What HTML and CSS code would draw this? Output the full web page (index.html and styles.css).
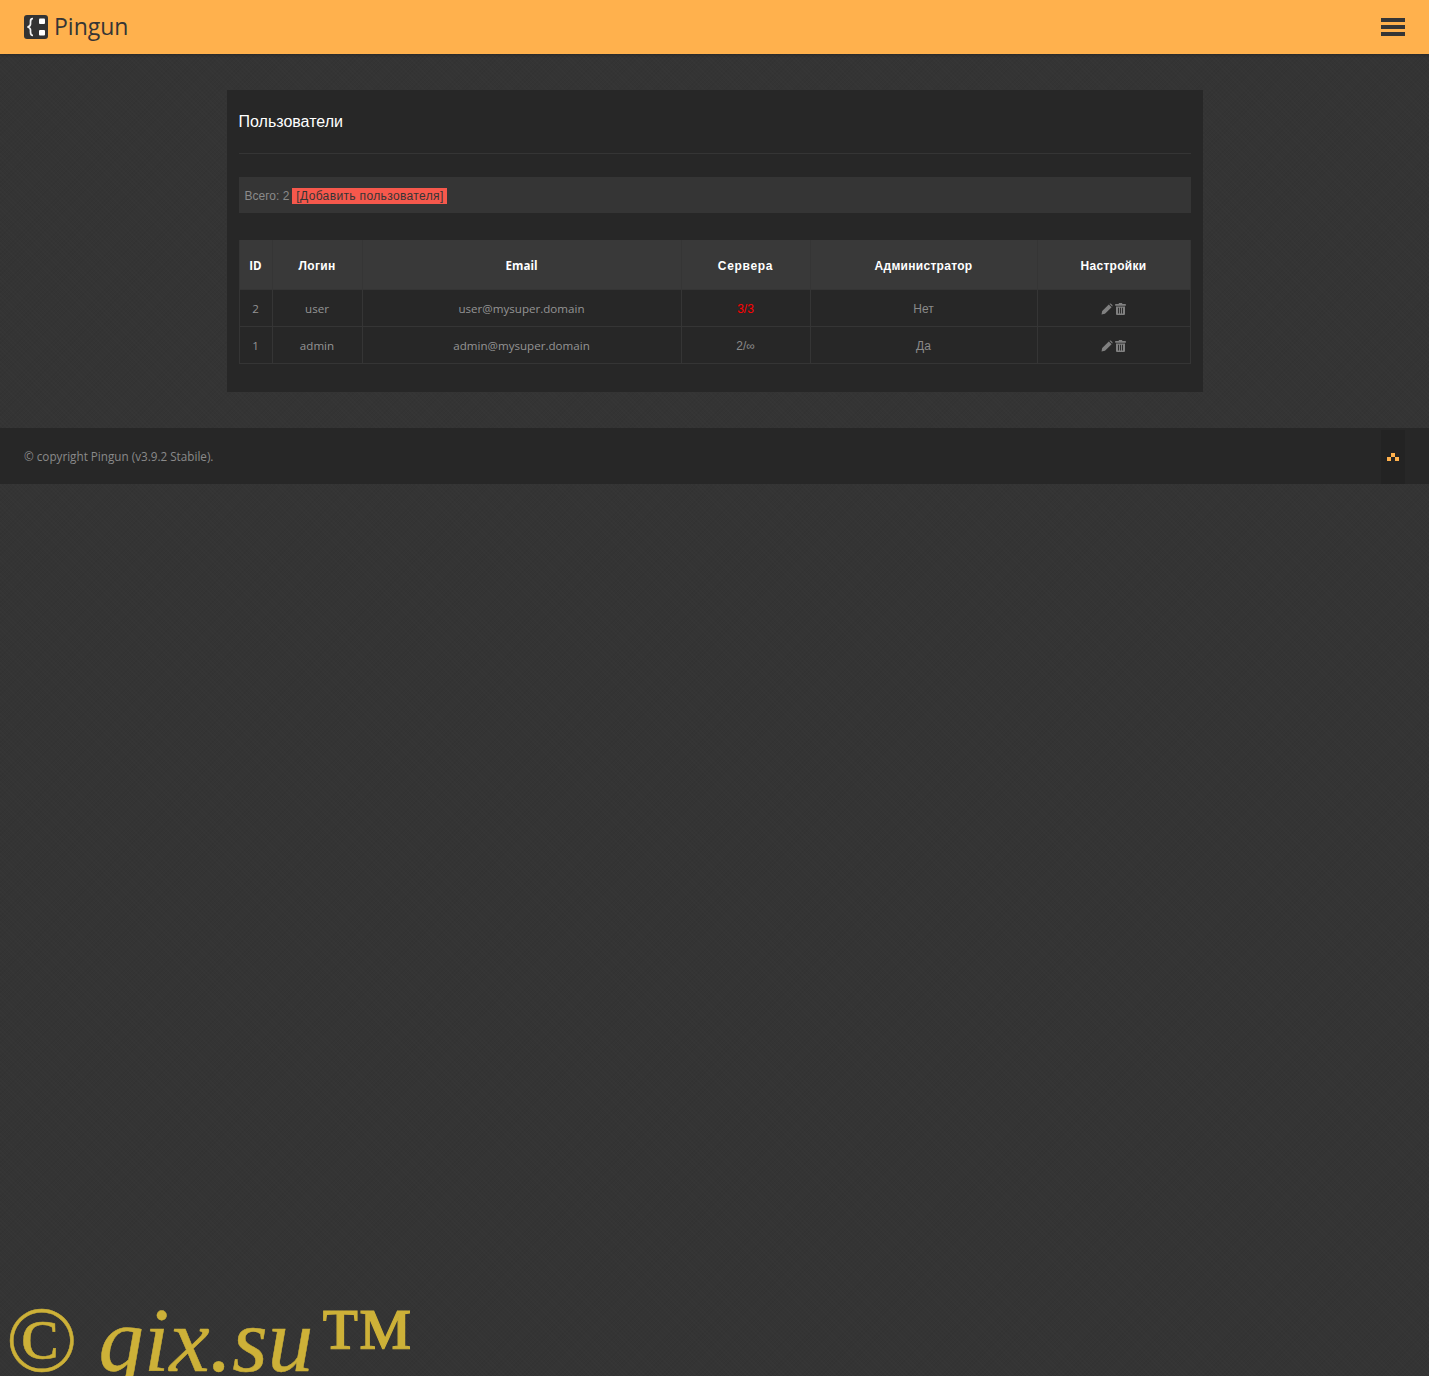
FILE: index.html
```html
<!DOCTYPE html>
<html lang="ru">
<head>
    <meta charset="UTF-8">
    <title>Pingun</title>
    <link rel="stylesheet" href="styles.css">
</head>
<body>

    <header class="topbar">
        <a class="brand" href="#">
            <svg class="brand-icon" width="24" height="24" viewBox="0 0 24 24">
                <rect width="24" height="24" rx="3" fill="#333"/>
                <path d="M9 3.5 C6.5 3.5 6.5 5 6.5 7 L6.5 9 C6.5 10.5 5.5 11.5 3.5 12 C5.5 12.5 6.5 13.5 6.5 15 L6.5 17 C6.5 19 6.5 20.5 9 20.5" fill="none" stroke="#f2f2f2" stroke-width="1.7"/>
                <rect x="15" y="3.5" width="6" height="5.5" rx="1" fill="#fff"/>
                <rect x="15" y="15" width="6" height="5.5" rx="1" fill="#fff"/>
            </svg>
            <span class="brand-name">Pingun</span>
        </a>
        <button class="menu-btn" aria-label="Menu">
            <span></span><span></span><span></span>
        </button>
    </header>

    <main class="content">
        <section class="panel">
            <h1 class="panel-title">Пользователи</h1>

            <div class="summary">
                Всего: 2
                <a class="add-link" href="#">[Добавить пользователя]</a>
            </div>

            <table class="users">
                <thead>
                    <tr>
                        <th class="col-id latin">ID</th>
                        <th class="col-login">Логин</th>
                        <th class="col-email latin">Email</th>
                        <th class="col-servers">Сервера</th>
                        <th class="col-admin">Администратор</th>
                        <th class="col-settings">Настройки</th>
                    </tr>
                </thead>
                <tbody>
                    <tr>
                        <td class="latin">2</td>
                        <td class="latin">user</td>
                        <td class="latin">user@mysuper.domain</td>
                        <td class="over-limit">3/3</td>
                        <td>Нет</td>
                        <td class="actions">
                            <a href="#" title="edit">
                                <svg width="12" height="12" viewBox="0 0 12 12"><path d="M0.5 11.5 L1.2 8 L7.8 1.4 L10.6 4.2 L4 10.8 Z M8.6 0.7 Q9.3 0.1 10 0.7 L11.3 2 Q11.9 2.7 11.3 3.4 L11.2 3.6 L8.4 0.8 Z"/></svg>
                            </a>
                            <a href="#" title="delete">
                                <svg width="11" height="12" viewBox="0 0 11 12"><path d="M3.8 0 H7.2 V1 H10.8 V2.8 H0.2 V1 H3.8 Z M1 3.4 H10 V11 Q10 12 9 12 H2 Q1 12 1 11 Z M3 4.8 V10.6 H3.9 V4.8 Z M5.05 4.8 V10.6 H5.95 V4.8 Z M7.1 4.8 V10.6 H8 V4.8 Z" fill-rule="evenodd"/></svg>
                            </a>
                        </td>
                    </tr>
                    <tr>
                        <td class="latin">1</td>
                        <td class="latin">admin</td>
                        <td class="latin">admin@mysuper.domain</td>
                        <td>2/∞</td>
                        <td>Да</td>
                        <td class="actions">
                            <a href="#" title="edit">
                                <svg width="12" height="12" viewBox="0 0 12 12"><path d="M0.5 11.5 L1.2 8 L7.8 1.4 L10.6 4.2 L4 10.8 Z M8.6 0.7 Q9.3 0.1 10 0.7 L11.3 2 Q11.9 2.7 11.3 3.4 L11.2 3.6 L8.4 0.8 Z"/></svg>
                            </a>
                            <a href="#" title="delete">
                                <svg width="11" height="12" viewBox="0 0 11 12"><path d="M3.8 0 H7.2 V1 H10.8 V2.8 H0.2 V1 H3.8 Z M1 3.4 H10 V11 Q10 12 9 12 H2 Q1 12 1 11 Z M3 4.8 V10.6 H3.9 V4.8 Z M5.05 4.8 V10.6 H5.95 V4.8 Z M7.1 4.8 V10.6 H8 V4.8 Z" fill-rule="evenodd"/></svg>
                            </a>
                        </td>
                    </tr>
                </tbody>
            </table>
        </section>
    </main>

    <footer class="footer">
        <span class="copyright">© copyright Pingun (v3.9.2 Stabile).</span>
        <a class="to-top" href="#" aria-label="Top">
            <svg width="12" height="8" viewBox="0 0 12 8" fill="#ffb14d">
                <rect x="4" y="0" width="4" height="4"/>
                <rect x="0" y="4" width="4" height="4"/>
                <rect x="8" y="4" width="4" height="4"/>
            </svg>
        </a>
    </footer>

    <div class="watermark">© <i>gix.su</i><span class="tm">™</span></div>

</body>
</html>
```

FILE: styles.css
```css
* {
    box-sizing: border-box;
}

body {
    position: relative;
    min-height: 100vh;
    margin: 0;
    overflow: hidden;
    font-family: "Liberation Sans", Arial, sans-serif;
    font-size: 12px;
    color: #8a8a8a;
    background-color: #343434;
    background-image:
        repeating-linear-gradient(45deg, rgba(255, 255, 255, 0.012) 0 1px, transparent 1px 3px),
        repeating-linear-gradient(-45deg, rgba(0, 0, 0, 0.03) 0 1px, transparent 1px 3px);
}

a {
    color: inherit;
    text-decoration: none;
}

.topbar {
    display: flex;
    align-items: center;
    justify-content: space-between;
    height: 54px;
    padding: 0 24px;
    background-color: #ffb14d;
    box-shadow: 0 1px 3px rgba(0, 0, 0, 0.25);
}

.brand {
    display: flex;
    align-items: center;
    gap: 6px;
    font-family: "Open Sans", sans-serif;
    font-size: 23px;
    color: #353535;
}

.brand-name {
    padding-bottom: 2px;
}

.menu-btn {
    display: flex;
    flex-direction: column;
    gap: 3px;
    width: 24px;
    padding: 0;
    border: none;
    background: none;
}

.menu-btn span {
    display: block;
    height: 4px;
    background-color: #353535;
}

.content {
    padding: 36px 0;
}

.panel {
    width: 976px;
    margin: 0 auto;
    padding: 12px 12px 28px;
    background-color: #272727;
}

.panel-title {
    margin: 0 0 23px;
    padding: 10px 0 22px;
    border-bottom: 1px solid #353535;
    font-size: 16px;
    font-weight: normal;
    line-height: 19px;
    color: #fff;
}

.summary {
    display: flex;
    align-items: center;
    gap: 3px;
    height: 36px;
    margin-bottom: 27px;
    padding: 1px 6px 0;
    background-color: #353535;
}

.add-link {
    padding: 0 3px 0 4px;
    letter-spacing: 0.36px;
    line-height: 16px;
    color: #353535;
    background-color: #f6584c;
}

.users {
    width: 100%;
    border-collapse: collapse;
    table-layout: fixed;
    border: 1px solid #353535;
    border-top: none;
}

.users th {
    height: 49px;
    padding: 3px 0 0;
    border-left: 1px solid #353535;
    font-weight: bold;
    letter-spacing: 0.3px;
    color: #fff;
    background-color: #393939;
}

.users td {
    height: 37px;
    padding: 2px 0 0;
    border: 1px solid #353535;
    text-align: center;
}

.users td.latin,
.users th.latin {
    font-family: "Open Sans", sans-serif;
    font-size: 11.6px;
    letter-spacing: 0;
}

.users td.latin {
    color: #949494;
}

.users th.col-servers {
    letter-spacing: 0.7px;
}

.col-id { width: 33px; }
.col-login { width: 90px; }
.col-email { width: 319px; }
.col-servers { width: 129px; }
.col-admin { width: 227px; }

.over-limit {
    color: #f00;
}

.actions a {
    display: inline-block;
    margin: 0 -1px;
    vertical-align: middle;
}

.actions svg {
    display: block;
    fill: #808080;
}

.footer {
    display: flex;
    align-items: center;
    justify-content: space-between;
    height: 56px;
    padding: 0 24px;
    font-family: "Open Sans", sans-serif;
    font-size: 11.7px;
    background-color: #272727;
}

.copyright {
    padding-top: 1px;
}

.to-top {
    display: flex;
    align-items: center;
    justify-content: center;
    align-self: stretch;
    width: 24px;
    margin-top: 2px;
    background-color: #232323;
}

.watermark {
    position: absolute;
    left: 6px;
    bottom: -16px;
    font-family: "Liberation Serif", serif;
    font-size: 94px;
    line-height: 103px;
    white-space: nowrap;
    color: #cdb138;
    -webkit-text-stroke: 0.5px #cdb138;
}

.watermark i {
    margin-left: -2.5px;
    font-size: 91px;
}

.tm {
    position: relative;
    top: 3px;
    margin-left: 6px;
    font-size: 96px;
    -webkit-text-stroke-width: 1.2px;
}
```
